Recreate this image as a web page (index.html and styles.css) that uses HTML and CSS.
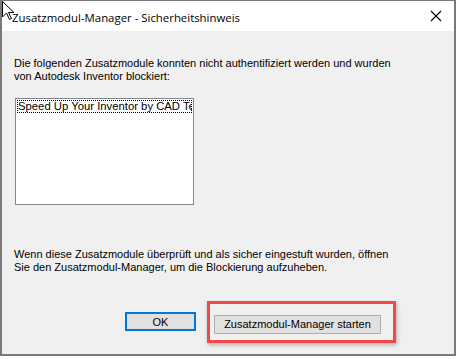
FILE: index.html
```html
<!DOCTYPE html>
<html lang="de">
<head>
  <meta charset="UTF-8">
  <title>Zusatzmodul-Manager - Sicherheitshinweis</title>
  <link rel="stylesheet" href="styles.css">
</head>
<body>
<div class="fenster">
  <div class="titel">
    <span class="titeltext">Zusatzmodul-Manager - Sicherheitshinweis</span>
    <svg class="schliessen" width="12" height="12" viewBox="0 0 12 12">
      <path d="M1 1 L11 11 M11 1 L1 11" stroke="#000" stroke-width="1.1" fill="none"/>
    </svg>
  </div>
  <div class="inhalt">
    <p class="hinweis">Die folgenden Zusatzmodule konnten nicht authentifiziert werden und wurden<br>von Autodesk Inventor blockiert:</p>
    <div class="liste">
      <div class="eintrag">Speed Up Your Inventor by CAD Team</div>
    </div>
    <p class="hinweis unten">Wenn diese Zusatzmodule überprüft und als sicher eingestuft wurden, öffnen<br>Sie den Zusatzmodul-Manager, um die Blockierung aufzuheben.</p>
    <div class="knoepfe">
      <button class="knopf ok">OK</button>
      <div class="markierung">
        <button class="knopf">Zusatzmodul-Manager starten</button>
      </div>
    </div>
  </div>
  <svg class="zeiger" width="14" height="20" viewBox="0 0 14 20">
    <path d="M0.5 0.5 L0.5 16 L4.5 12 L7.5 18.5 L9.5 17.5 L6.5 11.5 L12 11.5 Z" fill="#fff" stroke="#000" stroke-width="1"/>
  </svg>
</div>
</body>
</html>
```

FILE: styles.css
```css
body { margin: 0; padding: 0; background: #fff; }
.fenster { position: relative; width: 452px; height: 353px; border: 2px solid #7a7a7a; border-top-width: 1px; background: #f0f0f0; font-family: 'Liberation Sans', Arial, sans-serif; color: #000; overflow: hidden; }
.titel { height: 30px; background: #fff; display: flex; align-items: center; justify-content: space-between; padding: 0 10px 0 10px; }
.titeltext { font-family: 'Open Sans', 'Noto Sans', sans-serif; font-size: 11.4px; padding-top: 2px; }
.schliessen { margin-right: 2px; }
.inhalt { padding: 26px 0 0 12px; }
.hinweis { margin: 0; font-size: 11px; line-height: 13px; }
.liste { width: 177px; height: 105px; margin-top: 15px; margin-left: 1px; border: 1px solid #828790; background: #fff; overflow: hidden; }
.eintrag { margin: 1px; padding: 0 1px; font-size: 11.3px; line-height: 13px; white-space: nowrap; overflow: hidden; outline: 1px dotted #000; outline-offset: -1px; }
.unten { margin-top: 43px; }
.knoepfe { display: flex; align-items: center; margin-top: 27px; padding-left: 111px; }
.knopf { font-family: 'Liberation Sans', Arial, sans-serif; font-size: 11px; color: #000; background: #e1e1e1; border: 1px solid #adadad; height: 19px; padding: 0; }
.ok { width: 71px; border: 2px solid #0078d7; }
.markierung { margin-left: 11px; padding: 10px 12px 6px 4px; border: 3px solid #f24848; box-shadow: 1px 2px 4px #0004; }
.markierung .knopf { width: 167px; }
.zeiger { position: absolute; left: 0; top: 0; }
```
